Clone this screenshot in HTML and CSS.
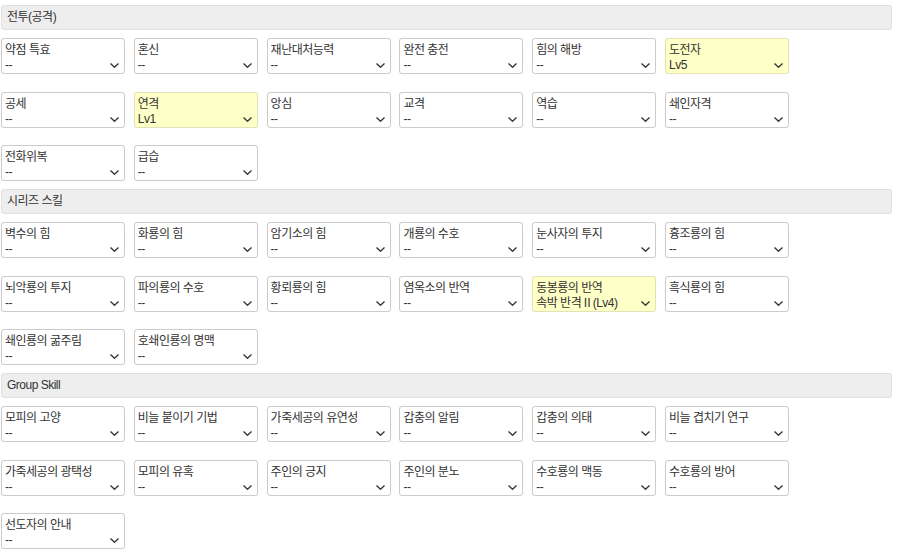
FILE: index.html
```html
<!DOCTYPE html>
<html lang="ko">
<head>
<meta charset="utf-8">
<link rel="stylesheet" href="styles.css">
</head>
<body>
<div class="page">
  <section class="section">
    <div class="section-title">전투(공격)</div>
    <div class="grid">
      <div class="field"><div class="label">약점 특효</div><div class="value"><span>--</span><svg class="chev" viewBox="0 0 9 5"><polyline points="0.5,0.5 4.5,4.3 8.5,0.5"/></svg></div></div>
      <div class="field"><div class="label">혼신</div><div class="value"><span>--</span><svg class="chev" viewBox="0 0 9 5"><polyline points="0.5,0.5 4.5,4.3 8.5,0.5"/></svg></div></div>
      <div class="field"><div class="label">재난대처능력</div><div class="value"><span>--</span><svg class="chev" viewBox="0 0 9 5"><polyline points="0.5,0.5 4.5,4.3 8.5,0.5"/></svg></div></div>
      <div class="field"><div class="label">완전 충전</div><div class="value"><span>--</span><svg class="chev" viewBox="0 0 9 5"><polyline points="0.5,0.5 4.5,4.3 8.5,0.5"/></svg></div></div>
      <div class="field"><div class="label">힘의 해방</div><div class="value"><span>--</span><svg class="chev" viewBox="0 0 9 5"><polyline points="0.5,0.5 4.5,4.3 8.5,0.5"/></svg></div></div>
      <div class="field active"><div class="label">도전자</div><div class="value"><span>Lv5</span><svg class="chev" viewBox="0 0 9 5"><polyline points="0.5,0.5 4.5,4.3 8.5,0.5"/></svg></div></div>
      <div class="field"><div class="label">공세</div><div class="value"><span>--</span><svg class="chev" viewBox="0 0 9 5"><polyline points="0.5,0.5 4.5,4.3 8.5,0.5"/></svg></div></div>
      <div class="field active"><div class="label">연격</div><div class="value"><span>Lv1</span><svg class="chev" viewBox="0 0 9 5"><polyline points="0.5,0.5 4.5,4.3 8.5,0.5"/></svg></div></div>
      <div class="field"><div class="label">앙심</div><div class="value"><span>--</span><svg class="chev" viewBox="0 0 9 5"><polyline points="0.5,0.5 4.5,4.3 8.5,0.5"/></svg></div></div>
      <div class="field"><div class="label">교격</div><div class="value"><span>--</span><svg class="chev" viewBox="0 0 9 5"><polyline points="0.5,0.5 4.5,4.3 8.5,0.5"/></svg></div></div>
      <div class="field"><div class="label">역습</div><div class="value"><span>--</span><svg class="chev" viewBox="0 0 9 5"><polyline points="0.5,0.5 4.5,4.3 8.5,0.5"/></svg></div></div>
      <div class="field"><div class="label">쇄인자격</div><div class="value"><span>--</span><svg class="chev" viewBox="0 0 9 5"><polyline points="0.5,0.5 4.5,4.3 8.5,0.5"/></svg></div></div>
      <div class="field"><div class="label">전화위복</div><div class="value"><span>--</span><svg class="chev" viewBox="0 0 9 5"><polyline points="0.5,0.5 4.5,4.3 8.5,0.5"/></svg></div></div>
      <div class="field"><div class="label">급습</div><div class="value"><span>--</span><svg class="chev" viewBox="0 0 9 5"><polyline points="0.5,0.5 4.5,4.3 8.5,0.5"/></svg></div></div>
    </div>
  </section>
  <section class="section">
    <div class="section-title">시리즈 스킬</div>
    <div class="grid">
      <div class="field"><div class="label">벽수의 힘</div><div class="value"><span>--</span><svg class="chev" viewBox="0 0 9 5"><polyline points="0.5,0.5 4.5,4.3 8.5,0.5"/></svg></div></div>
      <div class="field"><div class="label">화룡의 힘</div><div class="value"><span>--</span><svg class="chev" viewBox="0 0 9 5"><polyline points="0.5,0.5 4.5,4.3 8.5,0.5"/></svg></div></div>
      <div class="field"><div class="label">암기소의 힘</div><div class="value"><span>--</span><svg class="chev" viewBox="0 0 9 5"><polyline points="0.5,0.5 4.5,4.3 8.5,0.5"/></svg></div></div>
      <div class="field"><div class="label">개룡의 수호</div><div class="value"><span>--</span><svg class="chev" viewBox="0 0 9 5"><polyline points="0.5,0.5 4.5,4.3 8.5,0.5"/></svg></div></div>
      <div class="field"><div class="label">눈사자의 투지</div><div class="value"><span>--</span><svg class="chev" viewBox="0 0 9 5"><polyline points="0.5,0.5 4.5,4.3 8.5,0.5"/></svg></div></div>
      <div class="field"><div class="label">흉조룡의 힘</div><div class="value"><span>--</span><svg class="chev" viewBox="0 0 9 5"><polyline points="0.5,0.5 4.5,4.3 8.5,0.5"/></svg></div></div>
      <div class="field"><div class="label">뇌악룡의 투지</div><div class="value"><span>--</span><svg class="chev" viewBox="0 0 9 5"><polyline points="0.5,0.5 4.5,4.3 8.5,0.5"/></svg></div></div>
      <div class="field"><div class="label">파의룡의 수호</div><div class="value"><span>--</span><svg class="chev" viewBox="0 0 9 5"><polyline points="0.5,0.5 4.5,4.3 8.5,0.5"/></svg></div></div>
      <div class="field"><div class="label">황뢰룡의 힘</div><div class="value"><span>--</span><svg class="chev" viewBox="0 0 9 5"><polyline points="0.5,0.5 4.5,4.3 8.5,0.5"/></svg></div></div>
      <div class="field"><div class="label">염옥소의 반역</div><div class="value"><span>--</span><svg class="chev" viewBox="0 0 9 5"><polyline points="0.5,0.5 4.5,4.3 8.5,0.5"/></svg></div></div>
      <div class="field active"><div class="label">동봉룡의 반역</div><div class="value"><span>속박 반격Ⅱ(Lv4)</span><svg class="chev" viewBox="0 0 9 5"><polyline points="0.5,0.5 4.5,4.3 8.5,0.5"/></svg></div></div>
      <div class="field"><div class="label">흑식룡의 힘</div><div class="value"><span>--</span><svg class="chev" viewBox="0 0 9 5"><polyline points="0.5,0.5 4.5,4.3 8.5,0.5"/></svg></div></div>
      <div class="field"><div class="label">쇄인룡의 굶주림</div><div class="value"><span>--</span><svg class="chev" viewBox="0 0 9 5"><polyline points="0.5,0.5 4.5,4.3 8.5,0.5"/></svg></div></div>
      <div class="field"><div class="label">호쇄인룡의 명맥</div><div class="value"><span>--</span><svg class="chev" viewBox="0 0 9 5"><polyline points="0.5,0.5 4.5,4.3 8.5,0.5"/></svg></div></div>
    </div>
  </section>
  <section class="section">
    <div class="section-title">Group Skill</div>
    <div class="grid">
      <div class="field"><div class="label">모피의 고양</div><div class="value"><span>--</span><svg class="chev" viewBox="0 0 9 5"><polyline points="0.5,0.5 4.5,4.3 8.5,0.5"/></svg></div></div>
      <div class="field"><div class="label">비늘 붙이기 기법</div><div class="value"><span>--</span><svg class="chev" viewBox="0 0 9 5"><polyline points="0.5,0.5 4.5,4.3 8.5,0.5"/></svg></div></div>
      <div class="field"><div class="label">가죽세공의 유연성</div><div class="value"><span>--</span><svg class="chev" viewBox="0 0 9 5"><polyline points="0.5,0.5 4.5,4.3 8.5,0.5"/></svg></div></div>
      <div class="field"><div class="label">갑충의 알림</div><div class="value"><span>--</span><svg class="chev" viewBox="0 0 9 5"><polyline points="0.5,0.5 4.5,4.3 8.5,0.5"/></svg></div></div>
      <div class="field"><div class="label">갑충의 의태</div><div class="value"><span>--</span><svg class="chev" viewBox="0 0 9 5"><polyline points="0.5,0.5 4.5,4.3 8.5,0.5"/></svg></div></div>
      <div class="field"><div class="label">비늘 겹치기 연구</div><div class="value"><span>--</span><svg class="chev" viewBox="0 0 9 5"><polyline points="0.5,0.5 4.5,4.3 8.5,0.5"/></svg></div></div>
      <div class="field"><div class="label">가죽세공의 광택성</div><div class="value"><span>--</span><svg class="chev" viewBox="0 0 9 5"><polyline points="0.5,0.5 4.5,4.3 8.5,0.5"/></svg></div></div>
      <div class="field"><div class="label">모피의 유혹</div><div class="value"><span>--</span><svg class="chev" viewBox="0 0 9 5"><polyline points="0.5,0.5 4.5,4.3 8.5,0.5"/></svg></div></div>
      <div class="field"><div class="label">주인의 긍지</div><div class="value"><span>--</span><svg class="chev" viewBox="0 0 9 5"><polyline points="0.5,0.5 4.5,4.3 8.5,0.5"/></svg></div></div>
      <div class="field"><div class="label">주인의 분노</div><div class="value"><span>--</span><svg class="chev" viewBox="0 0 9 5"><polyline points="0.5,0.5 4.5,4.3 8.5,0.5"/></svg></div></div>
      <div class="field"><div class="label">수호룡의 맥동</div><div class="value"><span>--</span><svg class="chev" viewBox="0 0 9 5"><polyline points="0.5,0.5 4.5,4.3 8.5,0.5"/></svg></div></div>
      <div class="field"><div class="label">수호룡의 방어</div><div class="value"><span>--</span><svg class="chev" viewBox="0 0 9 5"><polyline points="0.5,0.5 4.5,4.3 8.5,0.5"/></svg></div></div>
      <div class="field"><div class="label">선도자의 안내</div><div class="value"><span>--</span><svg class="chev" viewBox="0 0 9 5"><polyline points="0.5,0.5 4.5,4.3 8.5,0.5"/></svg></div></div>
    </div>
  </section>
</div>
</body>
</html>
```

FILE: styles.css
```css
html, body {
  margin: 0;
  padding: 0;
  background: #ffffff;
}

body {
  font-family: "Liberation Sans", "Noto Sans CJK KR", sans-serif;
  font-size: 12px;
  letter-spacing: -0.5px;
  color: #333333;
}

.page {
  width: 892px;
  padding: 5px 0 0 1px;
  box-sizing: border-box;
}

.section {
  margin-bottom: 8px;
}

.section-title {
  height: 25px;
  box-sizing: border-box;
  background: #eeeeee;
  border: 1px solid #e0e0e0;
  border-radius: 3px;
  padding: 0 5px;
  line-height: 23px;
  margin-bottom: 8px;
  color: #333333;
}

.grid {
  display: grid;
  grid-template-columns: repeat(6, 124px);
  column-gap: 8.8px;
  row-gap: 17.5px;
}

.field {
  height: 36px;
  box-sizing: border-box;
  border: 1px solid #cccccc;
  border-radius: 3px;
  background: #ffffff;
  padding: 3px 5px 0 3px;
  box-shadow: 0 0 1px rgba(0, 0, 0, 0.06);
}

.field.active {
  background: #ffffc8;
  border-color: #e2e2b8;
}

.label {
  height: 16px;
  line-height: 16px;
  white-space: nowrap;
  overflow: hidden;
}

.value {
  display: flex;
  justify-content: space-between;
  align-items: center;
  height: 15px;
  line-height: 15px;
  white-space: nowrap;
}

.chev {
  width: 9px;
  height: 5px;
  flex: none;
  fill: none;
  stroke: #333333;
  stroke-width: 1.3;
}
```
